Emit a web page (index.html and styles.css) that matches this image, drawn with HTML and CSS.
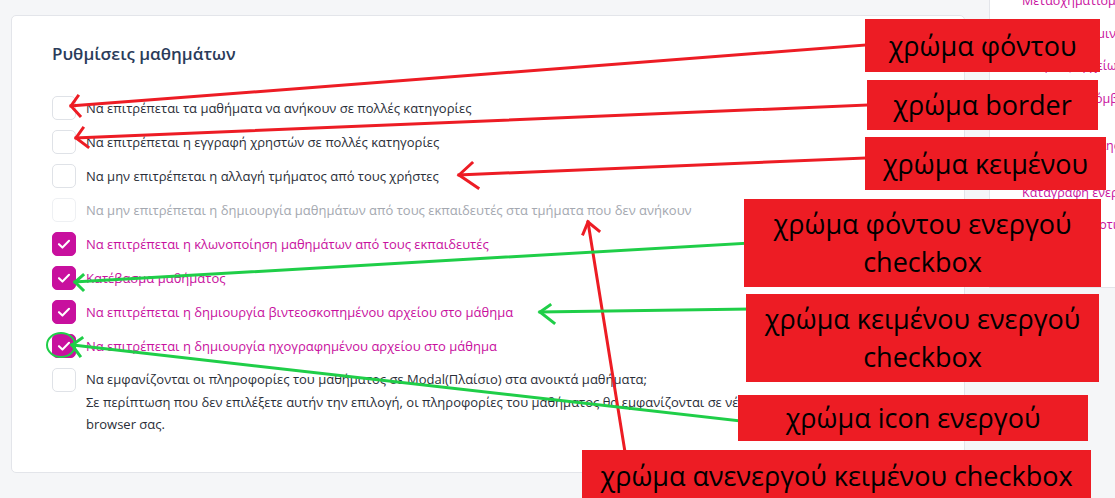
FILE: index.html
```html
<!DOCTYPE html>
<html lang="el">
<head>
<meta charset="utf-8">
<title>Ρυθμίσεις μαθημάτων</title>
<link rel="stylesheet" href="styles.css">
</head>
<body>
<div class="page">
  <main class="main">
    <section class="card">
      <h2 class="card-title">Ρυθμίσεις μαθημάτων</h2>
      <ul class="options">
        <li class="option"><span class="box"></span><span class="label">Να επιτρέπεται τα μαθήματα να ανήκουν σε πολλές κατηγορίες</span></li>
        <li class="option"><span class="box"></span><span class="label">Να επιτρέπεται η εγγραφή χρηστών σε πολλές κατηγορίες</span></li>
        <li class="option"><span class="box"></span><span class="label">Να μην επιτρέπεται η αλλαγή τμήματος από τους χρήστες</span></li>
        <li class="option is-disabled"><span class="box"></span><span class="label">Να μην επιτρέπεται η δημιουργία μαθημάτων από τους εκπαιδευτές στα τμήματα που δεν ανήκουν</span></li>
        <li class="option is-checked"><span class="box"><svg viewBox="0 0 24 24"><path d="M6.5 12.2l3.8 3.7 7.2-7.4"/></svg></span><span class="label">Να επιτρέπεται η κλωνοποίηση μαθημάτων από τους εκπαιδευτές</span></li>
        <li class="option is-checked"><span class="box"><svg viewBox="0 0 24 24"><path d="M6.5 12.2l3.8 3.7 7.2-7.4"/></svg></span><span class="label">Κατέβασμα μαθήματος</span></li>
        <li class="option is-checked"><span class="box"><svg viewBox="0 0 24 24"><path d="M6.5 12.2l3.8 3.7 7.2-7.4"/></svg></span><span class="label">Να επιτρέπεται η δημιουργία βιντεοσκοπημένου αρχείου στο μάθημα</span></li>
        <li class="option is-checked"><span class="box"><svg viewBox="0 0 24 24"><path d="M6.5 12.2l3.8 3.7 7.2-7.4"/></svg></span><span class="label">Να επιτρέπεται η δημιουργία ηχογραφημένου αρχείου στο μάθημα</span></li>
        <li class="option is-multi"><span class="box"></span><span class="label">Να εμφανίζονται οι πληροφορίες του μαθήματος σε Modal(Πλαίσιο) στα ανοικτά μαθήματα;<br>Σε περίπτωση που δεν επιλέξετε αυτήν την επιλογή, οι πληροφορίες του μαθήματος θα εμφανίζονται σε νέα καρτέλα του<br>browser σας.</span></li>
      </ul>
    </section>
  </main>
  <aside class="side">
    <ul class="side-list">
      <li>Μετασχηματισμός</li>
      <li>Ρυθμίσεις σεμιναρίων</li>
      <li>Αιτήσεις αρχείων</li>
      <li>Διαχείριση κόμβων</li>
      <li class="gap-lg">Ρυθμίσεις πύλης</li>
      <li class="gap-lg">Καταγραφή ενεργειών</li>
      <li>Ρυθμίσεις προτιμήσεων</li>
    </ul>
  </aside>
</div>

<svg class="arrows" viewBox="0 0 1115 498" width="1115" height="498">
  <g class="red">
    <polyline points="865,45 71,106"/>
    <polyline points="78,96 71,106 80,116"/>
    <polyline points="867,105 76,138"/>
    <polyline points="83,128 76,138 88,147"/>
    <polyline points="865,158 459,175"/>
    <polyline points="472,163 459,175 478,188"/>
    <polyline points="625,452 588,222"/>
    <polyline points="583,234 588,222 599,231"/>
  </g>
  <g class="green">
    <polyline points="750,243 75,282"/>
    <polyline points="83,275 75,282 83,290"/>
    <polyline points="750,309 540,312"/>
    <polyline points="550,305 540,312 554,323"/>
    <polyline points="750,422 72,345"/>
    <polyline points="82,338 72,345 80,356"/>
    <ellipse cx="61" cy="345" rx="14" ry="12"/>
  </g>
</svg>

<div class="note n1">χρώμα φόντου</div>
<div class="note n2">χρώμα border</div>
<div class="note n3">χρώμα κειμένου</div>
<div class="note n4">χρώμα φόντου ενεργού<br>checkbox</div>
<div class="note n5">χρώμα κειμένου ενεργού<br>checkbox</div>
<div class="note n6">χρώμα icon ενεργού</div>
<div class="note n7">χρώμα ανενεργού κειμένου checkbox</div>
</body>
</html>
```

FILE: styles.css
```css
* { box-sizing: border-box; }
html, body { margin: 0; padding: 0; }
body {
  width: 1115px;
  height: 498px;
  overflow: hidden;
  background: #f5f6f8;
  font-family: "Open Sans", "Noto Sans", "DejaVu Sans", sans-serif;
  position: relative;
}
.page {
  display: flex;
  align-items: flex-start;
}
.main {
  padding: 15px 0 0 11px;
}
.card {
  width: 954px;
  height: 458px;
  background: #ffffff;
  border: 1px solid #e3e5ea;
  border-radius: 5px;
  padding: 26px 40px 0 40px;
}
.card-title {
  margin: 0;
  font-size: 17px;
  line-height: 24px;
  font-weight: 600;
  color: #2b3c5a;
}
.options {
  list-style: none;
  margin: 30px 0 0 0;
  padding: 0;
  display: flex;
  flex-direction: column;
  gap: 10px;
}
.option {
  display: flex;
  align-items: center;
  gap: 10px;
  font-size: 13px;
  line-height: 20px;
  color: #2a2e38;
}
.box {
  flex: none;
  width: 24px;
  height: 24px;
  border: 1px solid #dfe2e7;
  border-radius: 5px;
  background: #fff;
  display: flex;
  align-items: center;
  justify-content: center;
}
.box svg {
  width: 24px;
  height: 24px;
  fill: none;
  stroke: #ffffff;
  stroke-width: 2.2;
  stroke-linecap: round;
  stroke-linejoin: round;
}
.is-disabled .box { border-color: #eef0f3; }
.is-disabled .label { color: #a4a8b0; }
.is-checked .box {
  background: #c8109e;
  border-color: #c8109e;
}
.is-checked .label { color: #c8109e; }
.is-multi {
  align-items: flex-start;
  line-height: 22.5px;
}

.side {
  margin-left: 24px;
  width: 140px;
  height: 288px;
  background: #ffffff;
  border-left: 1px solid #e3e5ea;
  border-bottom: 1px solid #e3e5ea;
  overflow: hidden;
}
.side-list {
  list-style: none;
  margin: -7px 0 0 0;
  padding: 0 0 0 32px;
  display: flex;
  flex-direction: column;
  gap: 16.5px;
  font-size: 12.5px;
  line-height: 16px;
  color: #c8109e;
  white-space: nowrap;
}
.side-list .gap-lg { margin-top: 14.5px; }

.arrows {
  position: absolute;
  left: 0;
  top: 0;
  pointer-events: none;
}
.arrows polyline, .arrows ellipse {
  fill: none;
  stroke-width: 3;
  stroke-linecap: square;
  stroke-linejoin: miter;
}
.arrows .red polyline { stroke: #ed1c24; }
.arrows .green polyline { stroke: #1fce48; }
.arrows .green ellipse { stroke: #1fce48; stroke-width: 2; }

.note {
  position: absolute;
  background: #ed1c24;
  color: #000;
  font-family: "Open Sans", "Noto Sans", sans-serif;
  font-size: 27px;
  line-height: 38px;
  text-align: center;
  display: flex;
  align-items: center;
  justify-content: center;
}
.n1 { left: 865px; top: 19px; width: 235px; height: 53px; }
.n2 { left: 867px; top: 80px; width: 231px; height: 50px; }
.n3 { left: 865px; top: 137px; width: 241px; height: 53px; }
.n4 { left: 744px; top: 199px; width: 357px; height: 88px; }
.n5 { left: 746px; top: 294px; width: 353px; height: 88px; }
.n6 { left: 738px; top: 395px; width: 350px; height: 46px; }
.n7 { left: 582px; top: 450px; width: 509px; height: 52px; }
```
